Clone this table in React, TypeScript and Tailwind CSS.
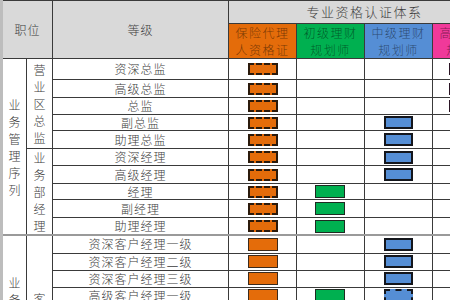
type Mark = 'dashed' | 'solid' | 'light' | undefined;

interface GradeRow {
  name: string;
  h: string;
  agent?: Mark;
  junior?: Mark;
  middle?: Mark;
  senior?: Mark;
}

// 等级ごとの資格マーク
const rows: GradeRow[] = [
  { name: '资深总监', h: 'h-[21px]', agent: 'dashed', senior: 'solid' },
  { name: '高级总监', h: 'h-[18px]', agent: 'dashed', senior: 'solid' },
  { name: '总监', h: 'h-[17px]', agent: 'dashed', senior: 'solid' },
  { name: '副总监', h: 'h-[16px]', agent: 'dashed', middle: 'solid' },
  { name: '助理总监', h: 'h-[18px]', agent: 'dashed', middle: 'solid' },
  { name: '资深经理', h: 'h-[17px]', agent: 'dashed', middle: 'solid' },
  { name: '高级经理', h: 'h-[18px]', agent: 'dashed', middle: 'solid' },
  { name: '经理', h: 'h-[16px]', agent: 'dashed', junior: 'solid' },
  { name: '副经理', h: 'h-[18px]', agent: 'dashed', junior: 'solid' },
  { name: '助理经理', h: 'h-[17px]', agent: 'dashed', junior: 'solid' },
  { name: '资深客户经理一级', h: 'h-[18px]', agent: 'solid', middle: 'solid', senior: 'light' },
  { name: '资深客户经理二级', h: 'h-[17px]', agent: 'solid', middle: 'solid', senior: 'light' },
  { name: '资深客户经理三级', h: 'h-[17px]', agent: 'solid', middle: 'solid', senior: 'light' },
  { name: '高级客户经理一级', h: 'h-[17px]', agent: 'solid', junior: 'solid', middle: 'dashed' },
];

const cell = 'border border-[#3a3a3a] p-0';

function VerticalText({ text }: { text: string }) {
  return (
    <div className="flex flex-col items-center">
      {text.split('').map((c, i) => (
        <span key={i} className="block h-[17px] leading-[17px]">
          {c}
        </span>
      ))}
    </div>
  );
}

function AgentBox({ mark }: { mark?: Mark }) {
  if (mark === 'dashed')
    return <div className="mx-auto w-[30px] h-[12px] bg-[#e46c0a] border-2 border-dashed border-[#2b1a0c]" />;
  if (mark === 'solid')
    return <div className="mx-auto w-[30px] h-[13px] bg-[#e46c0a] border border-[#3b2a1c]" />;
  return null;
}

function JuniorBox({ mark }: { mark?: Mark }) {
  if (!mark) return null;
  return <div className="ml-[18px] w-[30px] h-[13px] bg-[#00b050] border border-[#1f2a22]" />;
}

function MiddleBox({ mark }: { mark?: Mark }) {
  if (mark === 'solid')
    return <div className="mx-auto w-[29px] h-[13px] bg-[#558ed5] border-2 border-[#14161c]" />;
  if (mark === 'dashed')
    return <div className="mx-auto w-[29px] h-[13px] bg-[#558ed5] border-2 border-dashed border-[#14161c]" />;
  return null;
}

function SeniorBox({ mark }: { mark?: Mark }) {
  if (mark === 'solid')
    return <div className="ml-[16px] w-[28px] h-[12px] bg-[#d33a94] border-2 border-[#2a1424]" />;
  if (mark === 'light')
    return <div className="ml-[18px] w-[28px] h-[12px] bg-[#fbe3f0] border border-[#e58cc0]" />;
  return null;
}

/**
 * 职位・等级と专业资格认证体系の対応表
 */
export default function App() {
  return (
    <div className="w-[450px] h-[300px] overflow-hidden bg-white font-['Noto_Sans_CJK_SC','Noto_Sans',sans-serif] font-light text-[12px] leading-[14px] text-[#3c3c3c]">
      <table className="table-fixed w-[499px] border-collapse">
        <colgroup>
          <col className="w-[25px]" />
          <col className="w-[26px]" />
          <col className="w-[176px]" />
          <col className="w-[68px]" />
          <col className="w-[68px]" />
          <col className="w-[68px]" />
          <col className="w-[68px]" />
        </colgroup>
        <tbody>
          {/* ヘッダー */}
          <tr className="h-[23px]">
            <td rowSpan={2} colSpan={2} className={`${cell} border-l-[3px] border-l-[#bdbdbd] bg-[#d9d9d9] text-center tracking-[1px]`}>
              职位
            </td>
            <td rowSpan={2} className={`${cell} bg-[#d9d9d9] text-center tracking-[1px]`}>
              等级
            </td>
            <td colSpan={4} className={`${cell} bg-[#d9d9d9] text-center text-[13px] tracking-[1.5px]`}>
              专业资格认证体系
            </td>
          </tr>
          <tr className="h-[34px] text-black/50 leading-[17px] tracking-[1.5px]">
            <td className={`${cell} bg-[#e46c0a] text-center`}>
              保险代理
              <br />
              人资格证
            </td>
            <td className={`${cell} bg-[#00b050] text-center`}>
              初级理财
              <br />
              规划师
            </td>
            <td className={`${cell} bg-[#558ed5] text-center`}>
              中级理财
              <br />
              规划师
            </td>
            <td className={`${cell} bg-[#f0399a] text-center`}>
              高级理财
              <br />
              规划师
            </td>
          </tr>

          {/* 等级行 */}
          {rows.map((r, i) => {
            const sep = i === 10 ? 'border-t-2 border-t-[#9a9a9a]' : '';
            return (
              <tr key={r.name} className={r.h}>
                {i === 0 && (
                  <td rowSpan={10} className={`${cell} border-l-[3px] border-l-[#bdbdbd] align-middle`}>
                    <VerticalText text="业务管理序列" />
                  </td>
                )}
                {i === 0 && (
                  <td rowSpan={5} className={`${cell} align-middle`}>
                    <VerticalText text="营业区总监" />
                  </td>
                )}
                {i === 5 && (
                  <td rowSpan={5} className={`${cell} align-middle`}>
                    <VerticalText text="业务部经理" />
                  </td>
                )}
                {i === 10 && (
                  <td rowSpan={4} className={`${cell} ${sep} border-l-[3px] border-l-[#bdbdbd] align-top`}>
                    <div className="h-[66px] overflow-hidden pt-[38px]">
                      <VerticalText text="业务销售序列" />
                    </div>
                  </td>
                )}
                {i === 10 && (
                  <td rowSpan={4} className={`${cell} ${sep} align-top`}>
                    <div className="h-[66px] overflow-hidden pt-[54px]">
                      <VerticalText text="客户经理" />
                    </div>
                  </td>
                )}
                <td className={`${cell} ${sep} text-center tracking-[1px]`}>{r.name}</td>
                <td className={`${cell} ${sep}`}>
                  <AgentBox mark={r.agent} />
                </td>
                <td className={`${cell} ${sep}`}>
                  <JuniorBox mark={r.junior} />
                </td>
                <td className={`${cell} ${sep}`}>
                  <MiddleBox mark={r.middle} />
                </td>
                <td className={`${cell} ${sep}`}>
                  <SeniorBox mark={r.senior} />
                </td>
              </tr>
            );
          })}
        </tbody>
      </table>
    </div>
  );
}
